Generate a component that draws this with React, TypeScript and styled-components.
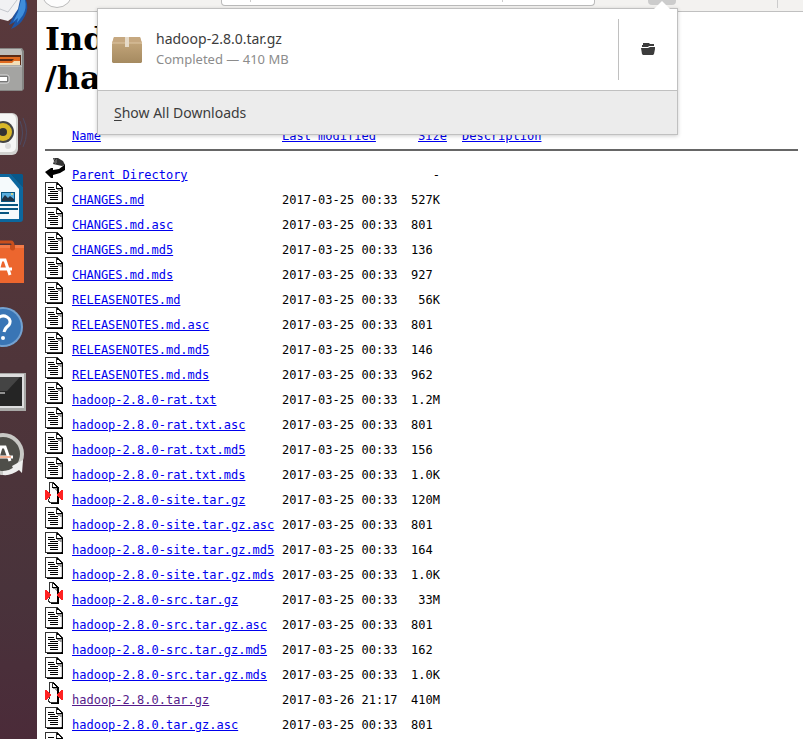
import React from "react";
import styled, { createGlobalStyle } from "styled-components";

const GlobalStyle = createGlobalStyle`
  body { margin: 0; background: #fff; overflow: hidden; }
  * { box-sizing: border-box; }
`;

const Desktop = styled.div`
  display: flex;
  height: 100vh;
  overflow: hidden;
`;

const Launcher = styled.nav`
  flex: 0 0 37px;
  display: flex;
  flex-direction: column;
  background: linear-gradient(#59393c, #4f353a 50%, #49333b 80%, #4b2b39);
`;

const LauncherButton = styled.button<{ $height: number }>`
  display: block;
  width: 37px;
  height: ${(p) => p.$height}px;
  padding: 0;
  border: 0;
  background: none;

  svg { display: block; }
`;

const Browser = styled.div`
  position: relative;
  flex: 1;
  min-width: 0;
  display: flex;
  flex-direction: column;
`;

const Toolbar = styled.header`
  flex: 0 0 12px;
  display: flex;
  align-items: flex-start;
  overflow: hidden;
  background: #f3f2f0;
  border-bottom: 1px solid #c0c0c0;
`;

const BackButton = styled.button`
  flex: none;
  width: 32px;
  height: 32px;
  margin: -24px 0 0 4px;
  padding: 0;
  border: 1px solid #bbb;
  border-radius: 50%;
  background: #fdfdfd;
`;

const AddressBar = styled.div`
  flex: 1;
  display: flex;
  justify-content: space-between;
  height: 6px;
  margin-left: 148px;
  padding: 0 91px 3px 28px;
  border: 1px solid #bbb;
  border-top: 0;
  border-radius: 0 0 4px 4px;
  background: #fff;
`;

const Divider = styled.span`
  width: 1px;
  background: #ccc;
`;

const ToolbarEnd = styled.div`
  flex: 0 0 208px;
  display: flex;
  justify-content: space-between;
  height: 8px;
  padding: 0 25px 0 53px;
`;

const DownloadsButton = styled.button`
  width: 28px;
  height: 5px;
  padding: 0;
  border: 0;
  border-radius: 0 0 4px 4px;
  background: #ccc;
`;

const Page = styled.main`
  padding: 8px 5px 0 8px;
  color: #000;
  font: 12px/14px "DejaVu Sans Mono", monospace;

  a { color: #00e; }
  a.visited { color: #551a8b; }
`;

const Title = styled.h1`
  margin: 0 0 31px;
  font: bold 32px/39px "DejaVu Serif", serif;
`;

const Listing = styled.table`
  width: 100%;
  table-layout: fixed;
  border-collapse: collapse;

  th, td {
    padding: 0;
    text-align: left;
    vertical-align: bottom;
    font-weight: normal;
    white-space: pre;
  }
  th {
    height: 20px;
    padding-bottom: 6px;
    border-bottom: 2px solid #666;
  }
  th.size { padding-left: 7px; }
  td { height: 25px; }
  tbody tr:first-child td { height: 32px; }
  td svg { display: block; margin-bottom: 3px; }
`;

const Col = styled.col<{ $width?: number }>`
  width: ${(p) => (p.$width ? `${p.$width}px` : "auto")};
`;

const Popup = styled.section`
  position: absolute;
  top: 8px;
  left: 60px;
  width: 581px;
  border: 1px solid #c0c0c0;
  background: #fff;
  box-shadow: 0 1px 4px rgba(0, 0, 0, 0.2);
  color: #3c3c3c;
  font-family: "Noto Sans", sans-serif;
`;

const Arrow = styled.svg`
  position: absolute;
  top: -9px;
  right: 5px;
`;

const Download = styled.div`
  display: flex;
  align-items: center;
  height: 81px;
  padding-left: 13px;
`;

const DownloadText = styled.div`
  flex: 1;
  margin-left: 13px;
  padding-bottom: 2px;
`;

const FileName = styled.div`
  font-size: 14px;
  line-height: 20px;
`;

const Status = styled.div`
  color: #8c8c8c;
  font-size: 13px;
  line-height: 20px;
`;

const FolderButton = styled.button`
  display: grid;
  place-items: center;
  width: 59px;
  height: 61px;
  padding: 0 0 2px;
  border: 0;
  border-left: 1px solid #c0c0c0;
  background: none;
`;

const ShowAll = styled.button`
  display: block;
  width: 100%;
  height: 44px;
  padding: 0 16px;
  border: 0;
  border-top: 1px solid #c0c0c0;
  background: #ececec;
  color: #3c3c3c;
  font: 14px/20px "Noto Sans", sans-serif;
  text-align: left;

  u { text-underline-offset: 2px; }
`;

const fills: Record<string, string> = { "#": "#000", r: "#f22", d: "#333", g: "#999", l: "#ccc" };

const PixelArt = ({ rows, label }: { rows: string[]; label: string }) => (
  <svg width="20" height="22" shapeRendering="crispEdges" role="img" aria-label={label}>
    {rows.flatMap((row, y) =>
      [...row].map((c, x) => (fills[c] ? <rect key={`${x}-${y}`} x={x} y={y} width="1" height="1" fill={fills[c]} /> : null))
    )}
  </svg>
);

const textIcon = [
  "ddddddddddddd",
  "d          d#d",
  "d          d##d",
  "d          d  #d",
  "d          d   #d",
  "d  ######  d    #d",
  "d          #######",
  "d  #######  ggggg#",
  "d            gggg#",
  "d    ########  gg#",
  "d               l#",
  "d  ##########   l#",
  "d               l#",
  "d  ##########   l#",
  "d               l#",
  "d    ########   l#",
  "d               l#",
  "d    ########   l#",
  "d               l#",
  "d               l#",
  "dddddddddddddddd##",
  "  ################",
];

const archiveIcon = [
  "    ddddd",
  "    d  d##",
  "    d  d ##",
  "    d  d  ##",
  "    d  d   ##",
  "    d  #######",
  "    d   gggg##",
  "    d     gg##",
  "rr  d      g##  rr",
  "rrr d       ## rrr",
  "rrrrd       ##rrrr",
  "rrrrr       #rrrrr",
  "rrrrrr      rrrrrr",
  "rrrrrr      rrrrrr",
  "rrrrr       #rrrrr",
  "rrrrd       ##rrrr",
  "rrr d       ## rrr",
  "rr d        ##  rr",
  "   d        ##",
  "   dd       ##",
  "    dddddddd##",
  "      ########",
];

const ParentIcon = () => (
  <svg width="20" height="22" role="img" aria-label="Parent directory">
    <path d="M20 7v6l-5 3-7 2v3H6l-6-6 6-4h2v2l6-1 4-3z" fill="#000" />
    <path d="M8 1h5l5 3 2 4-3 1-9-2 1-3z" fill="#333" />
    <path d="M9 2h1M11 3h1M10 4h1M9 5h1M11 5h1M10 6h1" stroke="#888" />
  </svg>
);

type Entry = { name: string; date: string; size: string };

const files: Entry[] = [
  ["CHANGES.md", "527K"], ["CHANGES.md.asc", "801"], ["CHANGES.md.md5", "136"], ["CHANGES.md.mds", "927"],
  ["RELEASENOTES.md", " 56K"], ["RELEASENOTES.md.asc", "801"], ["RELEASENOTES.md.md5", "146"], ["RELEASENOTES.md.mds", "962"],
  ["hadoop-2.8.0-rat.txt", "1.2M"], ["hadoop-2.8.0-rat.txt.asc", "801"], ["hadoop-2.8.0-rat.txt.md5", "156"], ["hadoop-2.8.0-rat.txt.mds", "1.0K"],
  ["hadoop-2.8.0-site.tar.gz", "120M"], ["hadoop-2.8.0-site.tar.gz.asc", "801"], ["hadoop-2.8.0-site.tar.gz.md5", "164"], ["hadoop-2.8.0-site.tar.gz.mds", "1.0K"],
  ["hadoop-2.8.0-src.tar.gz", " 33M"], ["hadoop-2.8.0-src.tar.gz.asc", "801"], ["hadoop-2.8.0-src.tar.gz.md5", "162"], ["hadoop-2.8.0-src.tar.gz.mds", "1.0K"],
  ["hadoop-2.8.0.tar.gz", "410M"], ["hadoop-2.8.0.tar.gz.asc", "801"], ["hadoop-2.8.0.tar.gz.md5", ""],
].map(([name, size]) => ({
  name,
  size,
  date: name === "hadoop-2.8.0.tar.gz" ? "2017-03-26 21:17" : "2017-03-25 00:33",
}));

const launcherItems = [
  {
    label: "Mail", height: 39,
    art: (
      <>
        <path d="M19 0h7q3 8-1 16-5 10-14 13l4-7-6 3 5-10z" fill="#1d55a5" />
        <path d="M21 0h4q2 8-2 15l-6 8 1-5-5 4 5-10z" fill="#3f8edb" />
        <path d="M0 0h20l-2 9-6 9-4 3-8-2z" fill="#f1f1f3" />
        <path d="M0 9l8 3 9-12" fill="none" stroke="#c3c6cc" />
      </>
    ),
  },
  {
    label: "Files", height: 68,
    art: (
      <>
        <path d="M0 9h22l2 3v38l-2 2H0z" fill="#858583" />
        <path d="M0 10h21l1 3v13H0z" fill="#bdbdbb" />
        <path d="M0 16h21v10H0z" fill="#5c2b16" />
        <path d="M0 18h20v2H0zM0 22h12l2-2h6v5H0z" fill="#e06a20" />
        <path d="M0 24h12l2-2h6v4H0z" fill="#f3dfb8" />
        <path d="M0 27h22v24H0z" fill="#a4a4a2" />
        <path d="M0 27h22" stroke="#d5d5d3" />
        <rect x="-10" y="36" width="19" height="8" rx="2" fill="#777" stroke="#ddd" />
        <path d="M0 38h7v4H0z" fill="#fff" />
      </>
    ),
  },
  {
    label: "Music", height: 62,
    art: (
      <>
        <path d="M20 14q5 12 0 24M23 11q7 14 0 29" fill="none" stroke="#4d4b63" strokeWidth="1" />
        <rect x="-20" y="6" width="38" height="42" rx="6" fill="#d2d2d0" />
        <rect x="-20" y="7" width="36" height="38" rx="5" fill="#f6f6f5" />
        <circle cx="3" cy="25" r="11" fill="#444" />
        <circle cx="3" cy="25" r="9" fill="#d8b728" />
        <circle cx="3" cy="25" r="4" fill="#333" />
        <circle cx="8" cy="39" r="3" fill="#ddd" />
      </>
    ),
  },
  {
    label: "Writer", height: 69,
    art: (
      <>
        <path d="M0 5h11l12 13v32q0 3-3 3H0z" fill="#0c679e" />
        <path d="M11 5h11l1 1v12z" fill="#07588a" />
        <path d="M0 8h9l10 12v30H0z" fill="#f5fafc" />
        <path d="M1 23h14v10H1z" fill="#075580" />
        <path d="M2 24h12v8H2z" fill="#5aaede" />
        <path d="M2 32v-2l3-4 3 3 2-2 4 3v2z" fill="#234" />
        <circle cx="12" cy="25" r="1" fill="#f4dc70" />
        <path d="M0 36h18M0 40h18M0 44h9" stroke="#075580" strokeWidth="2" />
      </>
    ),
  },
  {
    label: "Software", height: 63,
    art: (
      <>
        <path d="M0 4h11q2 0 2 4v7" fill="none" stroke="#c94f1c" strokeWidth="3" />
        <path d="M0 7h24v38H0z" fill="#ec662e" />
        <path d="M0 7h24v3H0z" fill="#f47b48" />
        <path d="M10 7h5v4q-2 3-5 0z" fill="#c94f1c" />
        <path d="M-3 37L1 22h4l5 15M0 31h12" fill="none" stroke="#fff" strokeWidth="3" />
      </>
    ),
  },
  {
    label: "Help", height: 70,
    art: (
      <>
        <circle cx="3" cy="26" r="20" fill="#74a2d1" />
        <circle cx="3" cy="26" r="18" fill="#3975b5" />
        <path d="M-3 18q5-5 10-2t2 8q-4 3-5 7" fill="none" stroke="#fff" strokeWidth="3" />
        <circle cx="3" cy="37" r="2" fill="#fff" />
      </>
    ),
  },
  {
    label: "Terminal", height: 60,
    art: (
      <>
        <path d="M0 2h26v38H0z" fill="#a8a8a6" />
        <path d="M0 3h24v34H0z" fill="#ddd" />
        <path d="M0 6h22v29H0z" fill="#252525" />
        <path d="M0 6h20L7 20H0z" fill="#444" />
        <path d="M0 22h5" stroke="#fff" />
      </>
    ),
  },
  {
    label: "Updater", height: 60,
    art: (
      <>
        <circle cx="3" cy="23" r="19" fill="#4e4e49" stroke="#c8c8c5" strokeWidth="4" />
        <path d="M12 35l11-6-1 13-3-3q-8 6-16 5v-4q6 0 10-3z" fill="#eee" />
        <path d="M-3 30L1 16h4l5 14" fill="none" stroke="#fff" strokeWidth="3" />
        <path d="M0 26h13" stroke="#fff" strokeWidth="3" />
        <path d="M0 26h11" stroke="#e9662c" />
      </>
    ),
  },
];

export default function App() {
  return (
    <>
      <GlobalStyle />
      <Desktop>
        <Launcher aria-label="Launcher">
          {launcherItems.map((item) => (
            <LauncherButton key={item.label} $height={item.height} aria-label={item.label}>
              <svg width="37" height={item.height}>{item.art}</svg>
            </LauncherButton>
          ))}
        </Launcher>
        <Browser>
          <Toolbar>
            <BackButton aria-label="Back" />
            <AddressBar><Divider /><Divider /></AddressBar>
            <ToolbarEnd><DownloadsButton aria-label="Downloads" /><Divider /></ToolbarEnd>
          </Toolbar>
          <Page>
            <Title>Index of<br />/hadoop/common</Title>
            <Listing>
              <colgroup><Col $width={27} /><Col $width={210} /><Col $width={129} /><Col $width={51} /><Col /></colgroup>
              <thead>
                <tr>
                  <th />
                  <th><a href="#name">Name</a></th>
                  <th><a href="#modified">Last modified</a></th>
                  <th className="size"><a href="#size">Size</a></th>
                  <th><a href="#description">Description</a></th>
                </tr>
              </thead>
              <tbody>
                <tr>
                  <td><ParentIcon /></td>
                  <td><a href="#parent">Parent Directory</a></td>
                  <td />
                  <td>{"   -"}</td>
                  <td />
                </tr>
                {files.map((f) => (
                  <tr key={f.name}>
                    <td><PixelArt rows={f.name.endsWith(".gz") ? archiveIcon : textIcon} label="File" /></td>
                    <td><a href={`#${f.name}`} className={f.name === "hadoop-2.8.0.tar.gz" ? "visited" : undefined}>{f.name}</a></td>
                    <td>{f.date}</td>
                    <td>{f.size}</td>
                    <td />
                  </tr>
                ))}
              </tbody>
            </Listing>
          </Page>
          <Popup aria-label="Downloads">
            <Arrow width="20" height="10"><path d="M1 10L10 1l9 9z" fill="#fff" /></Arrow>
            <Download>
              <svg width="32" height="32" aria-hidden="true">
                <defs>
                  <linearGradient id="box" x2="0" y2="1">
                    <stop stopColor="#c9ab80" />
                    <stop offset="1" stopColor="#a58a60" />
                  </linearGradient>
                </defs>
                <path d="M3 3h26l2 7v18l-1 1H2l-1-1V10z" fill="url(#box)" />
                <path d="M3 3h26l2 6H1z" fill="#c6a880" />
                <path d="M1 9h30" stroke="#dcc5a2" />
                <path d="M14 3h4v10h-4z" fill="#e6dac8" />
              </svg>
              <DownloadText>
                <FileName>hadoop-2.8.0.tar.gz</FileName>
                <Status>Completed — 410 MB</Status>
              </DownloadText>
              <FolderButton aria-label="Open containing folder">
                <svg width="14" height="14"><path d="M2 1h6l1 1h4v2H8L7 5H1V3h1zM0 6h7l2-1h5v2l-1 5-1 1H2l-1-1z" fill="#3c3c3c" /></svg>
              </FolderButton>
            </Download>
            <ShowAll><u>S</u>how All Downloads</ShowAll>
          </Popup>
        </Browser>
      </Desktop>
    </>
  );
}
